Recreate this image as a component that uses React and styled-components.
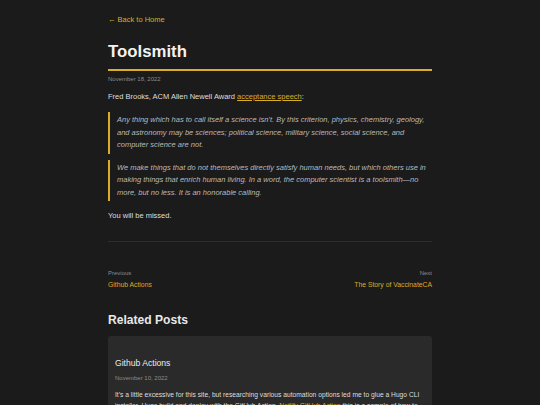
import styled, { createGlobalStyle } from 'styled-components';

const GlobalStyle = createGlobalStyle`
	html, body {
		margin: 0;
		padding: 0;
		background: #1b1b1b;
	}
	body {
		font-family: "Liberation Sans", Arial, sans-serif;
		color: #e4e4e4;
	}
`;

const Page = styled.main`
	width: 324px;
	margin: 0 auto;
	padding-top: 15px;
`;

const BackLink = styled.a`
	display: block;
	font-size: 7.5px;
	line-height: 10px;
	color: #d9ad26;
	text-decoration: none;
`;

const Title = styled.h1`
	margin: 17px 0 0;
	font-size: 16.8px;
	line-height: 20px;
	font-weight: 700;
	color: #f2f2f2;
	padding-bottom: 7px;
	border-bottom: 2px solid #d9ad26;
`;

const Meta = styled.div`
	font-size: 6px;
	line-height: 8px;
	color: #8c8c8c;
	margin-top: ${(p) => p.$top || 0}px;
`;

const Para = styled.p`
	margin: ${(p) => p.$top || 0}px 0 0;
	font-size: 7.5px;
	line-height: 10px;
	color: #dedede;
`;

const TextLink = styled.a`
	color: #d9ad26;
	text-decoration: underline;
`;

const Quote = styled.blockquote`
	margin: ${(p) => p.$top}px 0 0;
	padding: 2px 0 2px 7px;
	border-left: 2px solid #d9ad26;
	font-size: 7.5px;
	line-height: 12.5px;
	font-style: italic;
	color: #bababa;
`;

const Divider = styled.hr`
	margin: 20px 0 0;
	border: 0;
	border-top: 1px solid #2d2d2d;
`;

const PostNav = styled.nav`
	display: flex;
	justify-content: space-between;
	margin-top: 27px;
`;

const NavItem = styled.div`
	display: flex;
	flex-direction: column;
	align-items: ${(p) => (p.$right ? 'flex-end' : 'flex-start')};
	gap: 3px;
`;

const NavLabel = styled.span`
	font-size: 6px;
	line-height: 8px;
	color: #8c8c8c;
`;

const NavLink = styled.a`
	font-size: 6.8px;
	line-height: 9px;
	color: #d9ad26;
	text-decoration: none;
`;

const SectionTitle = styled.h2`
	margin: 23px 0 0;
	font-size: 12.1px;
	line-height: 16px;
	font-weight: 700;
	color: #e8e8e8;
`;

const Card = styled.article`
	margin-top: 8px;
	background: #2a2a2a;
	border-radius: 3px;
	padding: 21px 7px 12px;
`;

const CardTitle = styled.h3`
	margin: 0;
	font-size: 8.6px;
	line-height: 12px;
	font-weight: 400;
	color: #ececec;
`;

const CardText = styled.p`
	margin: 7px 0 0;
	font-size: 6.7px;
	line-height: 11px;
	color: #dedede;
`;

const App = () => {
	return (
		<>
			<GlobalStyle />
			<Page>
				<BackLink href="#">← Back to Home</BackLink>
				<Title>Toolsmith</Title>
				<Meta $top={4}>November 18, 2022</Meta>
				<Para $top={9}>
					Fred Brooks, ACM Allen Newell Award <TextLink href="#">acceptance speech</TextLink>:
				</Para>
				<Quote $top={10}>
					Any thing which has to call itself a science isn’t. By this criterion, physics, chemistry, geology,
					and astronomy may be sciences; political science, military science, social science, and
					computer science are not.
				</Quote>
				<Quote $top={6}>
					We make things that do not themselves directly satisfy human needs, but which others use in
					making things that enrich human living. In a word, the computer scientist is a toolsmith—no
					more, but no less. It is an honorable calling.
				</Quote>
				<Para $top={10}>You will be missed.</Para>
				<Divider />
				<PostNav>
					<NavItem>
						<NavLabel>Previous</NavLabel>
						<NavLink href="#">Github Actions</NavLink>
					</NavItem>
					<NavItem $right>
						<NavLabel>Next</NavLabel>
						<NavLink href="#">The Story of VaccinateCA</NavLink>
					</NavItem>
				</PostNav>
				<SectionTitle>Related Posts</SectionTitle>
				<Card>
					<CardTitle>Github Actions</CardTitle>
					<Meta $top={5}>November 10, 2022</Meta>
					<CardText>
						It’s a little excessive for this site, but researching various automation options led me to glue a Hugo CLI
						installer, Hugo build and deploy with the GitHub Action. <TextLink href="#">Netlify GitHub Action</TextLink>{' '}
						this is a sample of how to set it up.
					</CardText>
				</Card>
			</Page>
		</>
	);
};

export default App;
